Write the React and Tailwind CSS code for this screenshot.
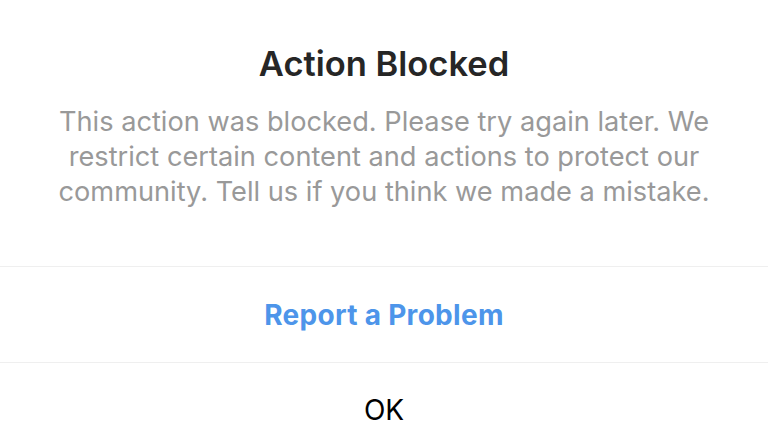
import React from 'react';

const App = () => {
  return (
    <div className="w-[768px] h-[445px] bg-white overflow-hidden font-['Inter','Liberation_Sans',sans-serif]">
      <div className="pt-[44px] pb-[57px] flex flex-col items-center text-center">
        <h1 className="text-[34.5px] leading-[40px] font-semibold text-[#262626]">Action Blocked</h1>
        <p className="mt-[20px] w-[700px] text-[27.2px] leading-[35px] text-[#999999]">
          This action was blocked. Please try again later. We restrict certain content and actions to protect our community. Tell us if you think we made a mistake.
        </p>
      </div>
      <div className="border-t border-[#efefef] h-[96px] flex items-center justify-center">
        <button className="text-[28px] font-bold tracking-[0.3px] text-[#4d95ea]">Report a Problem</button>
      </div>
      <div className="border-t border-[#efefef] h-[95px] flex items-center justify-center">
        <button className="text-[28px] text-black">OK</button>
      </div>
    </div>
  );
};

export default App;
